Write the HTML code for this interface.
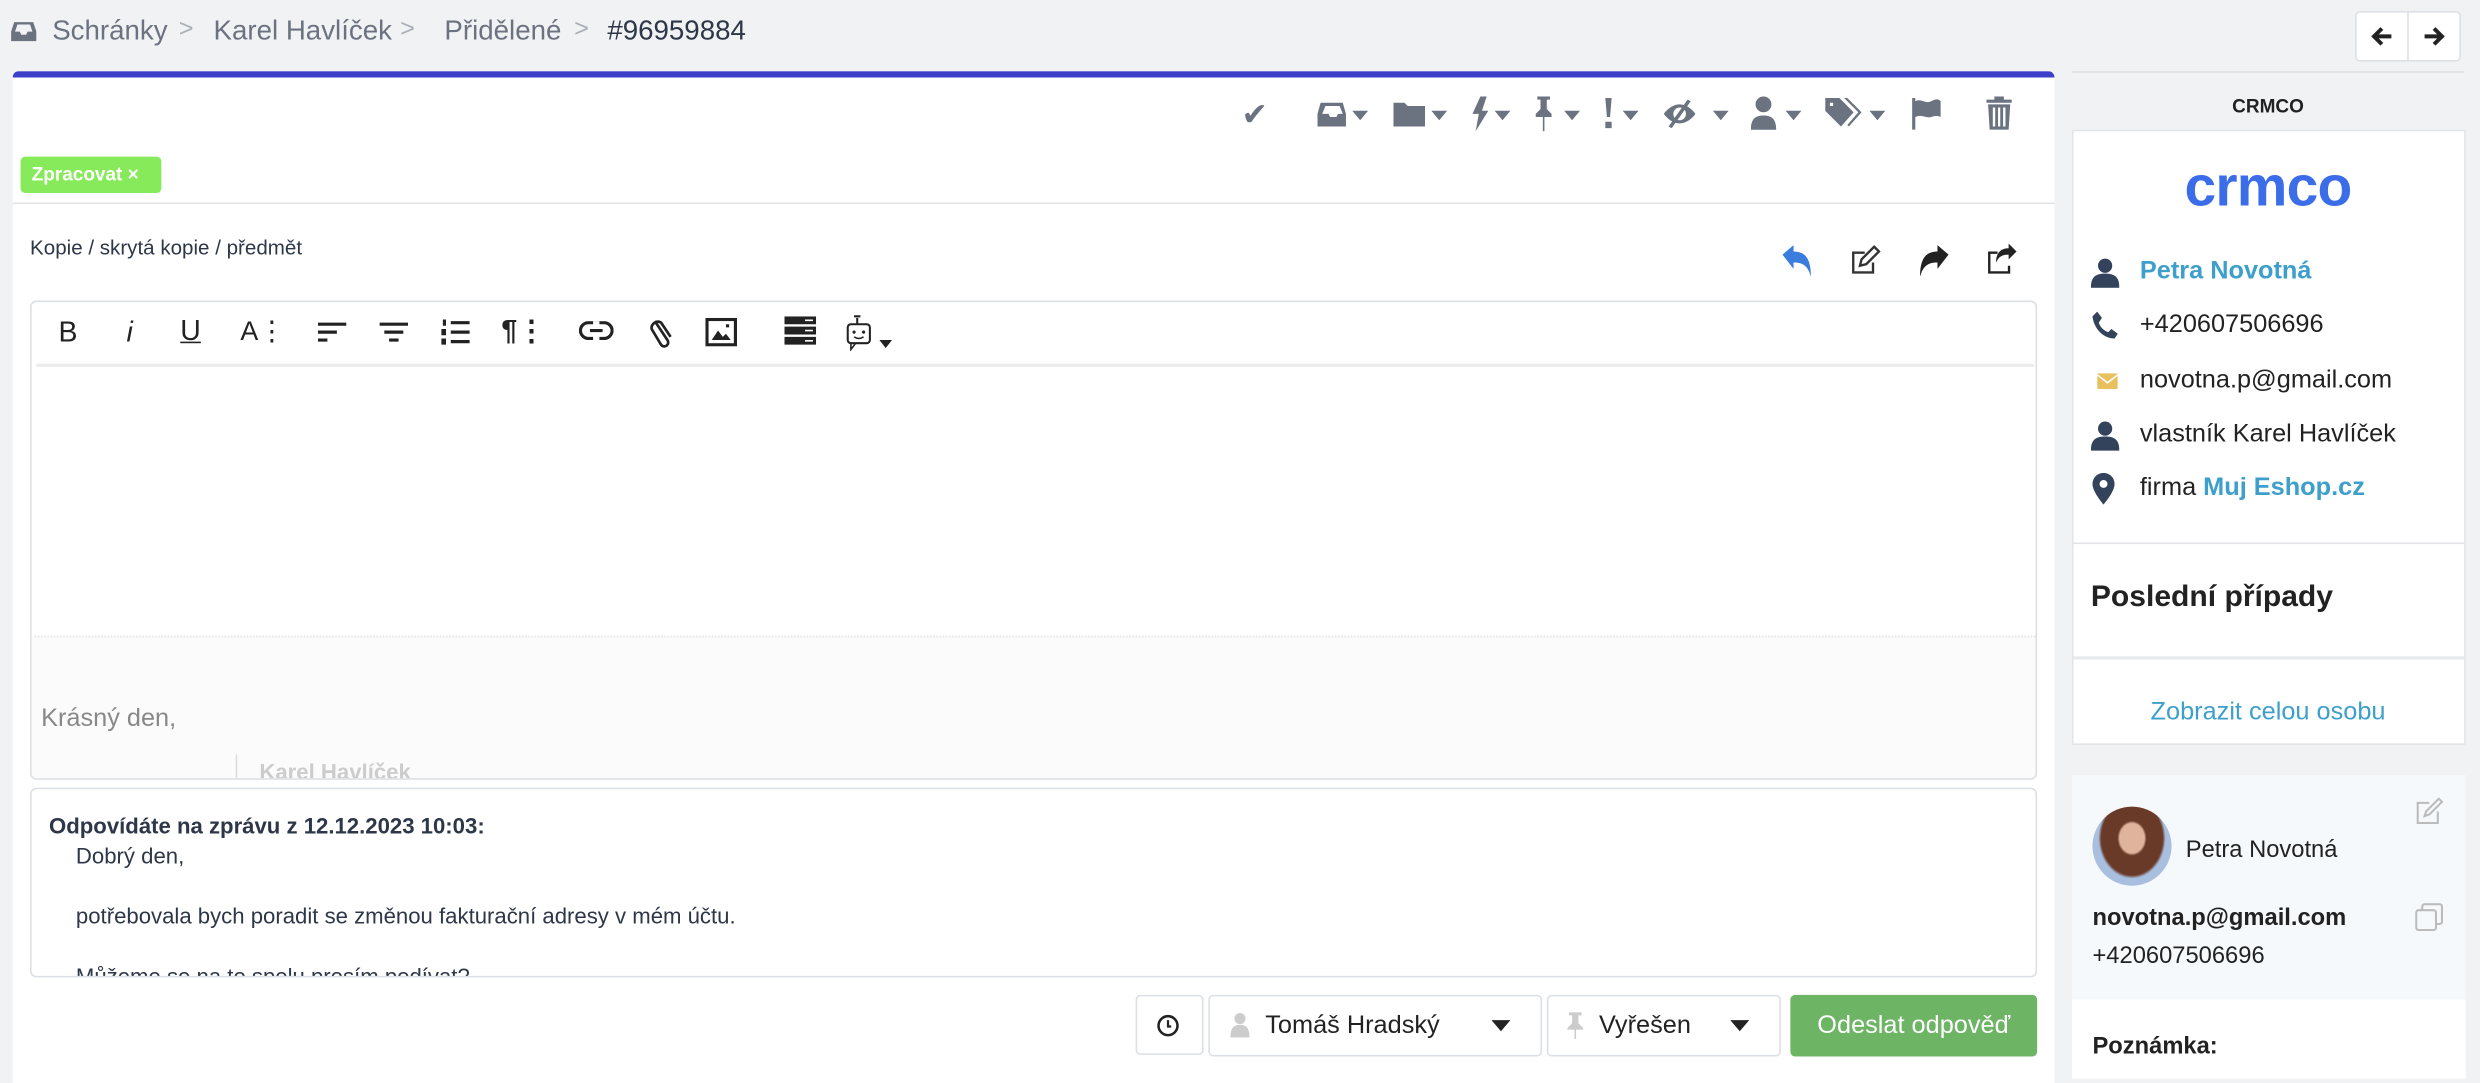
<!DOCTYPE html>
<html><head><meta charset="utf-8"><style>
*{box-sizing:border-box;margin:0;padding:0}
html,body{width:2480px;height:1070px;overflow:hidden;background:#f1f2f4}
#w{position:absolute;left:0;top:0;width:1568px;height:677px;transform:scale(1.5816);transform-origin:0 0;font-family:"Liberation Sans",sans-serif;color:#2d3748}
.a{position:absolute}
.ic{position:absolute;fill:#6b7280}
.t{white-space:nowrap}
.bc{position:absolute;top:9px;font-size:17.5px;color:#6b7280;white-space:nowrap}
.sp{position:absolute;top:10px;font-size:16px;color:#aab0b8}
</style></head><body><div id="w">

<!-- breadcrumb -->
<svg class="a" style="left:7px;top:13px" width="16" height="14" viewBox="0 0 16 14"><path d="M2 1h12l2 6v6H0V7z M2.5 7h3l1 2h3l1-2h3l-1.5-4.5h-8z" fill="#6b7280" fill-rule="evenodd"/></svg>
<div class="bc" style="left:33px">Schránky</div>
<div class="sp" style="left:113px">&gt;</div>
<div class="bc" style="left:135px">Karel Havlíček</div>
<div class="sp" style="left:253px">&gt;</div>
<div class="bc" style="left:281px">Přidělené</div>
<div class="sp" style="left:363px">&gt;</div>
<div class="bc" style="left:384px;color:#2d3748">#96959884</div>

<!-- nav buttons -->
<div class="a" style="left:1489px;top:7px;width:67px;height:32px;background:#fff;border:1px solid #dcdfe3;border-radius:3px"></div>
<div class="a" style="left:1522px;top:7px;width:1px;height:32px;background:#dcdfe3"></div>
<svg class="a" style="left:1499px;top:16px" width="14" height="14"><path d="M13 7H2 M7 2L2 7l5 5" stroke="#222" stroke-width="2.5" fill="none"/></svg>
<svg class="a" style="left:1532px;top:16px" width="14" height="14"><path d="M1 7h11 M7 2l5 5-5 5" stroke="#222" stroke-width="2.5" fill="none"/></svg>

<!-- main panel -->
<div class="a" style="left:8px;top:45px;width:1291px;height:640px;background:#fff;border-radius:4px 4px 0 0;border-top:4px solid #3c3fc8"></div>

<!-- toolbar icons -->
<div class="a t" style="left:785px;top:60px;font-size:20px;color:#6b7280">&#10004;</div>
<svg class="ic" style="left:833px;top:64px" width="34" height="17" viewBox="0 0 34 17"><path d="M2 1h14l2 7v8H0V8z M3 8h4l1 2h4l1-2h3l-2-5H5z" fill-rule="evenodd"/><path d="M22 6h10l-5 6z"/></svg>
<svg class="ic" style="left:881px;top:64px" width="36" height="17" viewBox="0 0 36 17"><path d="M0 1h7l2 2h11v13H0z"/><path d="M24 6h10l-5 6z"/></svg>
<svg class="ic" style="left:929px;top:61px" width="30" height="22" viewBox="0 0 30 22"><path d="M7 0L2 11h4L4 22l8-13H8l3-9z"/><path d="M16 9h10l-5 6z"/></svg>
<svg class="ic" style="left:969px;top:61px" width="33" height="22" viewBox="0 0 33 22"><path d="M3 0h8v2H9v6l3 3v2H2v-2l3-3V2H3z M6.5 13h1v9h-1z"/><path d="M20 9h10l-5 6z"/></svg>
<svg class="ic" style="left:1014px;top:62px" width="26" height="20" viewBox="0 0 26 20"><path d="M1 0h4l-1 12H2z M1 15h4v4H1z"/><path d="M12 8h10l-5 6z"/></svg>
<svg class="ic" style="left:1051px;top:63px" width="46" height="18" viewBox="0 0 46 18"><path d="M11 3C5 3 1 9 1 9s4 6 10 6 10-6 10-6-4-6-10-6zm0 2a4 4 0 110 8 4 4 0 010-8z" fill-rule="evenodd"/><path d="M16 0l2 1-12 17-2-1z"/><path d="M32 7h10l-5 6z"/></svg>
<svg class="ic" style="left:1107px;top:61px" width="36" height="22" viewBox="0 0 36 22"><circle cx="8" cy="5" r="5"/><path d="M0 21c0-7 3-9 8-9s8 2 8 9z"/><path d="M22 9h10l-5 6z"/></svg>
<svg class="ic" style="left:1154px;top:62px" width="40" height="20" viewBox="0 0 40 20"><path d="M0 0h9l9 9-8 9-10-10z M3 3v2h2V3z" fill-rule="evenodd"/><path d="M12 0h2l9 9-8 9-1-1 7-8z"/><path d="M28 8h10l-5 6z"/></svg>
<svg class="ic" style="left:1208px;top:62px" width="20" height="20" viewBox="0 0 20 20"><path d="M1 0h2v20H1z M3 2c4-2 6 2 10 0s5-1 6 0v10c-2-1-3-1-6 0s-6-2-10 0z"/></svg>
<svg class="ic" style="left:1256px;top:61px" width="16" height="21" viewBox="0 0 16 21"><path d="M5 0h6v2h5v2H0V2h5z M1 5h14l-1 16H2z M4 7v12h1.5V7z M7.3 7v12h1.4V7z M10.5 7v12H12V7z" fill-rule="evenodd"/></svg>

<!-- tag -->
<div class="a t" style="left:13px;top:99px;width:89px;height:23px;background:#86ea5a;border-radius:3px;color:#fff;font-weight:bold;font-size:12px;line-height:23px;padding-left:7px">Zpracovat ×</div>
<div class="a" style="left:8px;top:128px;width:1291px;height:1px;background:#e2e4e7"></div>

<div class="a t" style="left:19px;top:149px;font-size:13px;color:#2d3748">Kopie / skrytá kopie / předmět</div>

<!-- reply icons -->
<svg class="a" style="left:1127px;top:155px" width="19" height="20" viewBox="0 0 19 20"><path d="M0 6l7-6v4c7 0 11 4 11 16-2-7-5-9-11-9v4z" fill="#3b7ddd"/></svg>
<svg class="a" style="left:1170px;top:155px" width="19" height="19" viewBox="0 0 19 19"><path d="M1 4h8v1.5H2.5v11h11V11H15v7H1z" fill="#333"/><path d="M15 1l3 3-8 8-4 1 1-4z" fill="none" stroke="#333" stroke-width="1.5"/></svg>
<svg class="a" style="left:1213px;top:155px" width="19" height="20" viewBox="0 0 19 20"><path d="M19 6l-7-6v4C5 4 1 8 1 20c2-7 5-9 11-9v4z" fill="#222"/></svg>
<svg class="a" style="left:1256px;top:154px" width="19" height="20" viewBox="0 0 19 20"><path d="M1 5h6v1.5H2.5v11h11V14H15v5H1z" fill="#222"/><path d="M19 5l-5-5v3c-5 0-8 3-8 9 2-4 4-5 8-5v3z" fill="#222"/></svg>

<!-- editor -->
<div class="a" style="left:19px;top:190px;width:1269px;height:303px;border:1px solid #dcdfe3;border-radius:4px;background:#fff;overflow:hidden">
  <div class="a" style="left:0;top:211px;width:1269px;height:92px;background:#fbfbfb"></div>
  <div class="a" style="left:2px;top:211px;width:1265px;height:0;border-top:1px dotted #e4e4e4"></div>
  <div class="a" style="left:3px;top:39px;width:1263px;height:2px;background:#ececec"></div>
</div>
<div class="a t" style="left:37px;top:200px;font-size:18px;color:#222">B</div>
<div class="a t" style="left:80px;top:200px;font-size:18px;font-style:italic;color:#222">i</div>
<div class="a t" style="left:114px;top:199px;font-size:18px;text-decoration:underline;color:#222">U</div>
<div class="a t" style="left:152px;top:200px;font-size:17px;color:#222">A&#8942;</div>
<svg class="a" style="left:201px;top:203px" width="18" height="14"><path d="M0 1h18v2H0z M0 6h12v2H0z M0 11h6v2H0z" fill="#222"/></svg>
<svg class="a" style="left:240px;top:203px" width="18" height="14"><path d="M0 1h18v2H0z M3 6h12v2H3z M6 11h6v2H6z" fill="#222"/></svg>
<svg class="a" style="left:279px;top:202px" width="18" height="16"><path d="M1 0h2v4H1z M0 6h3v4H0z M0 12h3v4H0z M6 1h12v2H6z M6 7h12v2H6z M6 13h12v2H6z" fill="#222"/></svg>
<div class="a t" style="left:317px;top:199px;font-size:18px;font-weight:bold;color:#222">¶&#8942;</div>
<svg class="a" style="left:366px;top:203px" width="22" height="12"><rect x="1" y="1" width="20" height="10" rx="5" fill="none" stroke="#222" stroke-width="2"/><rect x="9" y="0" width="4" height="12" fill="#fff"/><path d="M7 5h8v2H7z" fill="#222"/></svg>
<svg class="a" style="left:410px;top:200px" width="16" height="20"><path d="M4 3l8 12a2.5 2.5 0 01-4 3L2 8a4 4 0 016-4l6 9" fill="none" stroke="#222" stroke-width="1.7"/></svg>
<svg class="a" style="left:446px;top:201px" width="20" height="18"><rect x="1" y="1" width="18" height="16" fill="none" stroke="#222" stroke-width="2"/><path d="M4 14l4-6 3 4 2-2 3 4z M13 4h2v2h-2z" fill="#222"/></svg>
<svg class="a" style="left:496px;top:200px" width="20" height="18"><path d="M0 0h20v5H0z M0 6.5h20v5H0z M0 13h20v5H0z" fill="#222"/><path d="M13 2h5v1h-5z M13 8.5h5v1h-5z M13 15h5v1h-5z" fill="#fff"/></svg>
<svg class="a" style="left:534px;top:198px" width="32" height="24"><rect x="2" y="7" width="14" height="12" rx="2" fill="none" stroke="#222" stroke-width="1.3"/><path d="M8 7V3 M6 2h4" stroke="#222" stroke-width="1.3"/><circle cx="6" cy="12" r="1" fill="#222"/><circle cx="12" cy="12" r="1" fill="#222"/><path d="M6 15q3 2 6 0" stroke="#222" fill="none"/><path d="M4 19v4l3-4" stroke="#222" fill="none"/><path d="M22 17h8l-4 5z" fill="#222"/></svg>

<div class="a t" style="left:26px;top:446px;font-size:16px;color:#888">Krásný den,</div>
<div class="a" style="left:149px;top:477px;width:1px;height:15px;background:#ddd"></div>
<div class="a" style="left:164px;top:480px;width:200px;height:12px;overflow:hidden"><div class="t" style="font-size:14px;font-weight:bold;color:#ccc">Karel Havlíček</div></div>

<!-- quote box -->
<div class="a" style="left:19px;top:498px;width:1269px;height:120px;border:1px solid #dcdfe3;border-radius:4px;background:#fff;overflow:hidden">
  <div class="a t" style="left:11px;top:15px;font-size:14px;font-weight:bold;color:#2d3748">Odpovídáte na zprávu z 12.12.2023 10:03:</div>
  <div class="a t" style="left:28px;top:34px;font-size:14px;color:#2d3748">Dobrý den,</div>
  <div class="a t" style="left:28px;top:72px;font-size:14px;color:#2d3748">potřebovala bych poradit se změnou fakturační adresy v mém účtu.</div>
  <div class="a t" style="left:28px;top:110px;font-size:14px;color:#2d3748">Můžeme se na to spolu prosím podívat?</div>
</div>

<!-- bottom buttons -->
<div class="a" style="left:718px;top:629px;width:43px;height:38px;border:1px solid #dcdfe3;border-radius:3px;background:#fff"></div>
<svg class="a" style="left:731px;top:641px" width="15" height="15"><circle cx="7.5" cy="7.5" r="6" fill="none" stroke="#222" stroke-width="1.6"/><path d="M7.5 4v4h2" stroke="#222" fill="none" stroke-width="1.4"/></svg>
<div class="a" style="left:764px;top:629px;width:211px;height:39px;border:1px solid #dcdfe3;border-radius:3px;background:#fff"></div>
<svg class="a" style="left:778px;top:640px" width="12" height="16"><circle cx="6" cy="4" r="3.5" fill="#ccc"/><path d="M0 16c0-6 2-8 6-8s6 2 6 8z" fill="#ccc"/></svg>
<div class="a t" style="left:800px;top:640px;font-size:16px;color:#222">Tomáš Hradský</div>
<div class="a" style="left:943px;top:645px;border-left:6px solid transparent;border-right:6px solid transparent;border-top:7px solid #222"></div>
<div class="a" style="left:978px;top:629px;width:148px;height:39px;border:1px solid #dcdfe3;border-radius:3px;background:#fff"></div>
<svg class="a" style="left:990px;top:640px" width="12" height="17"><path d="M2 0h8v2H8v5l3 3v1H1v-1l3-3V2H2z M5.5 11h1v6h-1z" fill="#ccc"/></svg>
<div class="a t" style="left:1011px;top:640px;font-size:16px;color:#222">Vyřešen</div>
<div class="a" style="left:1094px;top:645px;border-left:6px solid transparent;border-right:6px solid transparent;border-top:7px solid #222"></div>
<div class="a t" style="left:1132px;top:629px;width:156px;height:39px;background:#6db565;border-radius:3px;color:#fff;font-size:16px;line-height:39px;text-align:center">Odeslat odpověď</div>

<!-- sidebar -->
<div class="a" style="left:1310px;top:45px;width:248px;height:1px;background:#dcdfe3"></div>
<div class="a t" style="left:1310px;top:60px;width:248px;text-align:center;font-size:12px;font-weight:bold;color:#222">CRMCO</div>
<div class="a" style="left:1310px;top:82px;width:249px;height:389px;background:#fff;border:1px solid #e2e4e7"></div>
<div class="a t" style="left:1310px;top:97px;width:248px;text-align:center;font-size:36px;font-weight:bold;color:#3b6de8;letter-spacing:-0.5px">crmco</div>

<svg class="a" style="left:1322px;top:163px" width="18" height="19"><circle cx="9" cy="5" r="4.5" fill="#33435c"/><path d="M0 19c0-7 3-9 9-9s9 2 9 9z" fill="#33435c"/></svg>
<div class="a t" style="left:1353px;top:163px;font-size:16px;font-weight:bold;color:#3d9fcb">Petra Novotná</div>
<svg class="a" style="left:1323px;top:197px" width="16" height="18"><path d="M3 0l3 4-2 3c1 3 3 5 6 6l2-2 4 3-2 3C7 17 1 11 0 3z" fill="#33435c"/></svg>
<div class="a t" style="left:1353px;top:197px;font-size:16px;color:#222">+420607506696</div>
<svg class="a" style="left:1326px;top:236px" width="13" height="10"><rect width="13" height="10" rx="1" fill="#e8c060"/><path d="M0 1l6.5 5 6.5-5" stroke="#fff" fill="none"/></svg>
<div class="a t" style="left:1353px;top:232px;font-size:16px;color:#222">novotna.p@gmail.com</div>
<svg class="a" style="left:1322px;top:266px" width="18" height="19"><circle cx="9" cy="5" r="4.5" fill="#33435c"/><path d="M0 19c0-7 3-9 9-9s9 2 9 9z" fill="#33435c"/></svg>
<div class="a t" style="left:1353px;top:266px;font-size:16px;color:#222">vlastník Karel Havlíček</div>
<svg class="a" style="left:1323px;top:299px" width="14" height="20"><path d="M7 0a7 7 0 017 7c0 5-7 13-7 13S0 12 0 7a7 7 0 017-7zm0 4.5a2.5 2.5 0 100 5 2.5 2.5 0 000-5z" fill="#33435c" fill-rule="evenodd"/></svg>
<div class="a t" style="left:1353px;top:300px;font-size:16px;color:#222">firma <b style="color:#3d9fcb">Muj Eshop.cz</b></div>

<div class="a" style="left:1311px;top:343px;width:247px;height:1px;background:#e2e4e7"></div>
<div class="a t" style="left:1322px;top:367px;font-size:19px;font-weight:bold;color:#222">Poslední případy</div>
<div class="a" style="left:1311px;top:415px;width:247px;height:2px;background:#e8e9eb"></div>
<div class="a t" style="left:1310px;top:442px;width:248px;text-align:center;font-size:16px;color:#3d9fcb">Zobrazit celou osobu</div>

<!-- person card -->
<div class="a" style="left:1310px;top:490px;width:249px;height:142px;background:#f5f9fc"></div>
<div class="a" style="left:1310px;top:632px;width:249px;height:50px;background:#fff"></div>
<div class="a" style="left:1323px;top:510px;width:50px;height:50px;border-radius:50%;background:radial-gradient(ellipse at 50% 40%,#e0b39c 0 22%,#6a3a28 26% 55%,#a9bfe0 60%)"></div>
<div class="a t" style="left:1382px;top:529px;font-size:15px;color:#222">Petra Novotná</div>
<svg class="a" style="left:1527px;top:504px" width="18" height="18"><path d="M1 3h8v1.3H2.3v11.4h11.4V9H15v8H1z" fill="#bbb"/><path d="M15 1l2 2-8 8-3 1 1-3z" fill="none" stroke="#bbb" stroke-width="1.3"/></svg>
<div class="a t" style="left:1323px;top:572px;font-size:15px;font-weight:bold;color:#222">novotna.p@gmail.com</div>
<svg class="a" style="left:1527px;top:571px" width="18" height="18"><rect x="4.5" y="0.7" width="12.5" height="12.5" rx="1.5" fill="none" stroke="#bbb" stroke-width="1.3"/><rect x="0.7" y="4.5" width="12.5" height="12.5" rx="1.5" fill="#f5f9fc" stroke="#bbb" stroke-width="1.3"/></svg>
<div class="a t" style="left:1323px;top:596px;font-size:15px;color:#222">+420607506696</div>
<div class="a t" style="left:1323px;top:653px;font-size:15px;font-weight:bold;color:#222">Poznámka:</div>

</div></body></html>
